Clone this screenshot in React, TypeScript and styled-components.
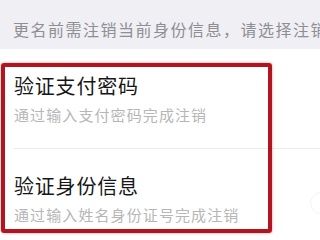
import React, { FC } from 'react';
import styled, { createGlobalStyle } from 'styled-components';

const GlobalStyle = createGlobalStyle`
  html, body {
    margin: 0;
    padding: 0;
    background: #ffffff;
    overflow: hidden;
  }

  body {
    font-family: "Noto Sans CJK SC", "Noto Sans", sans-serif;
  }
`;

const Page = styled.div`
  position: relative;
  width: 320px;
  height: 240px;
  overflow: hidden;
  background: #ffffff;
`;

const Notice = styled.div`
  height: 49px;
  padding-left: 13px;
  background-color: #efeff4;
  color: #8e8e93;
  font-size: 16px;
  letter-spacing: 1.5px;
  line-height: 58px;
  white-space: nowrap;
  overflow: hidden;
`;

const List = styled.div`
  display: flex;
  flex-direction: column;
`;

const Row = styled.div<{ $divider?: boolean }>`
  display: flex;
  align-items: center;
  justify-content: space-between;
  margin-left: 14px;
  padding: 24px 0 22px;
  border-bottom: ${({ $divider }) => ($divider ? '1px solid #ececec' : 'none')};
`;

const Texts = styled.div`
  display: flex;
  flex-direction: column;
  gap: 5px;
`;

const Title = styled.div`
  color: #161616;
  font-size: 20px;
  line-height: 26px;
  letter-spacing: 0.8px;
`;

const Subtitle = styled.div`
  color: #b6b6b6;
  font-size: 15px;
  line-height: 22px;
  letter-spacing: 1.1px;
`;

const Radio = styled.span<{ $faint?: boolean }>`
  flex: none;
  width: 20px;
  height: 20px;
  margin-right: -12px;
  margin-top: 6px;
  border-radius: 50%;
  border: 1px solid ${({ $faint }) => ($faint ? '#f3f3f3' : 'transparent')};
`;

const Highlight = styled.div`
  position: absolute;
  left: 1px;
  top: 63px;
  width: 263px;
  height: 162px;
  border: 4px solid #b3141d;
  border-radius: 3px;
  box-shadow: 0 0 3px rgba(150, 20, 30, 0.45);
  pointer-events: none;
`;

type Option = {
  title: string;
  hint: string;
};

const options: Option[] = [
  { title: '验证支付密码', hint: '通过输入支付密码完成注销' },
  { title: '验证身份信息', hint: '通过输入姓名身份证号完成注销' },
];

const App: FC = () => (
  <>
    <GlobalStyle />
    <Page>
      <Notice>更名前需注销当前身份信息，请选择注销方式</Notice>

      <List>
        {options.map((option, i) => (
          <Row key={option.title} $divider={i < options.length - 1}>
            <Texts>
              <Title>{option.title}</Title>
              <Subtitle>{option.hint}</Subtitle>
            </Texts>
            <Radio $faint={i === 1} />
          </Row>
        ))}
      </List>

      <Highlight />
    </Page>
  </>
);

export default App;
